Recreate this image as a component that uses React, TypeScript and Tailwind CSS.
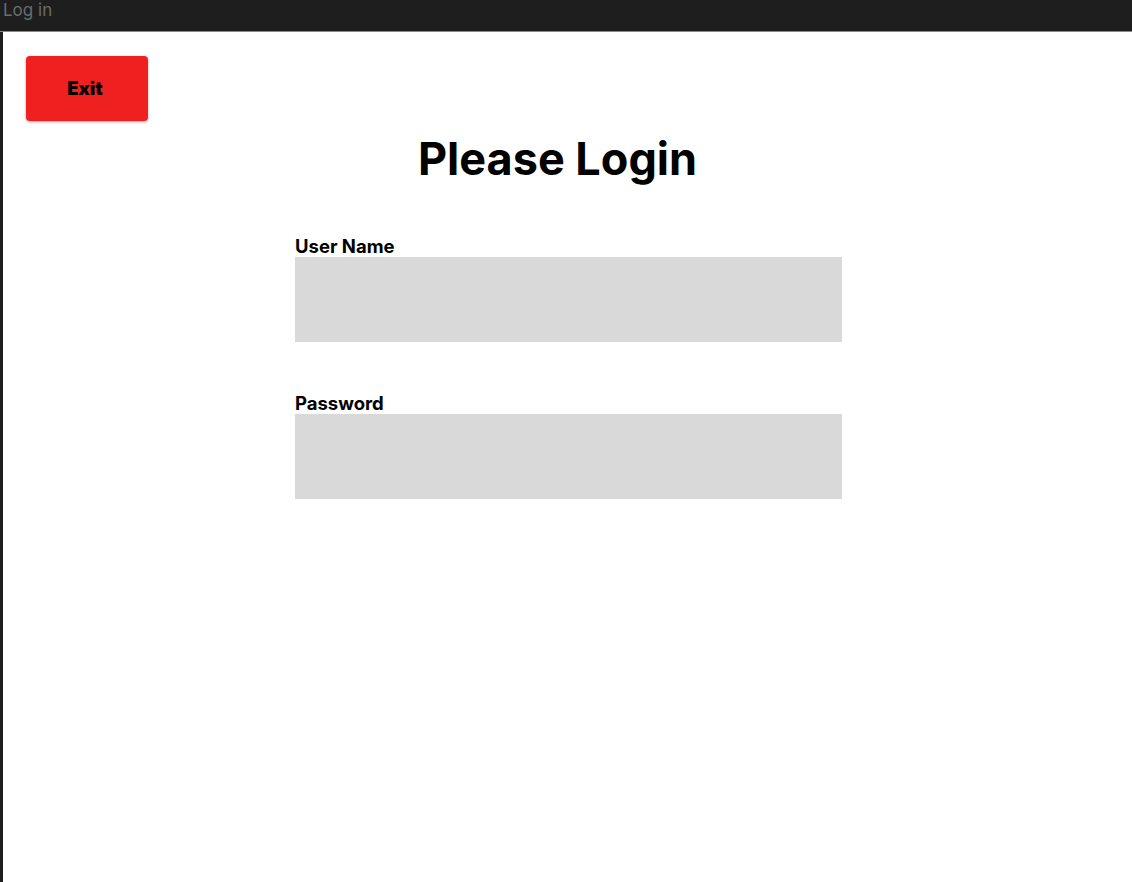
import React from 'react';

export default function App() {
  return (
    <div className="h-[882px] w-full bg-[#1e1e1e] flex flex-col overflow-hidden" style={{ fontFamily: 'Inter, "Noto Sans", sans-serif' }}>
      {/* Window title bar */}
      <div className="h-[32px] shrink-0 pl-[3px] pt-[1px] border-b border-[#8a8a8a]">
        <span className="block text-[17px] leading-[19px] text-[#6b6b6b]">Log in</span>
      </div>

      <div className="flex-1 ml-[3px] bg-white flex flex-col">
        <div className="pl-[23px] pt-[24px]">
          <button className="w-[122px] h-[65px] pr-[4px] pt-[1px] bg-[#ee2020] rounded-[4px] shadow-[0_1px_3px_rgba(0,0,0,0.35)] text-[18.5px] font-black text-black">
            Exit
          </button>
        </div>

        <h1 className="mt-[15px] pr-[20px] text-center text-[45px] leading-[45px] font-bold text-black">
          Please Login
        </h1>

        <form className="mt-[54px] flex flex-col items-center pl-[2px]">
          <div className="w-[547px] flex flex-col">
            <label className="text-[18.5px] leading-[22px] font-bold text-black">User Name</label>
            <input type="text" className="h-[85px] w-full bg-[#d9d9d9] outline-none" />
          </div>
          <div className="w-[547px] flex flex-col mt-[50px]">
            <label className="text-[18.5px] leading-[22px] font-bold text-black">Password</label>
            <input type="password" className="h-[85px] w-full bg-[#d9d9d9] outline-none" />
          </div>
        </form>
      </div>
    </div>
  );
}
